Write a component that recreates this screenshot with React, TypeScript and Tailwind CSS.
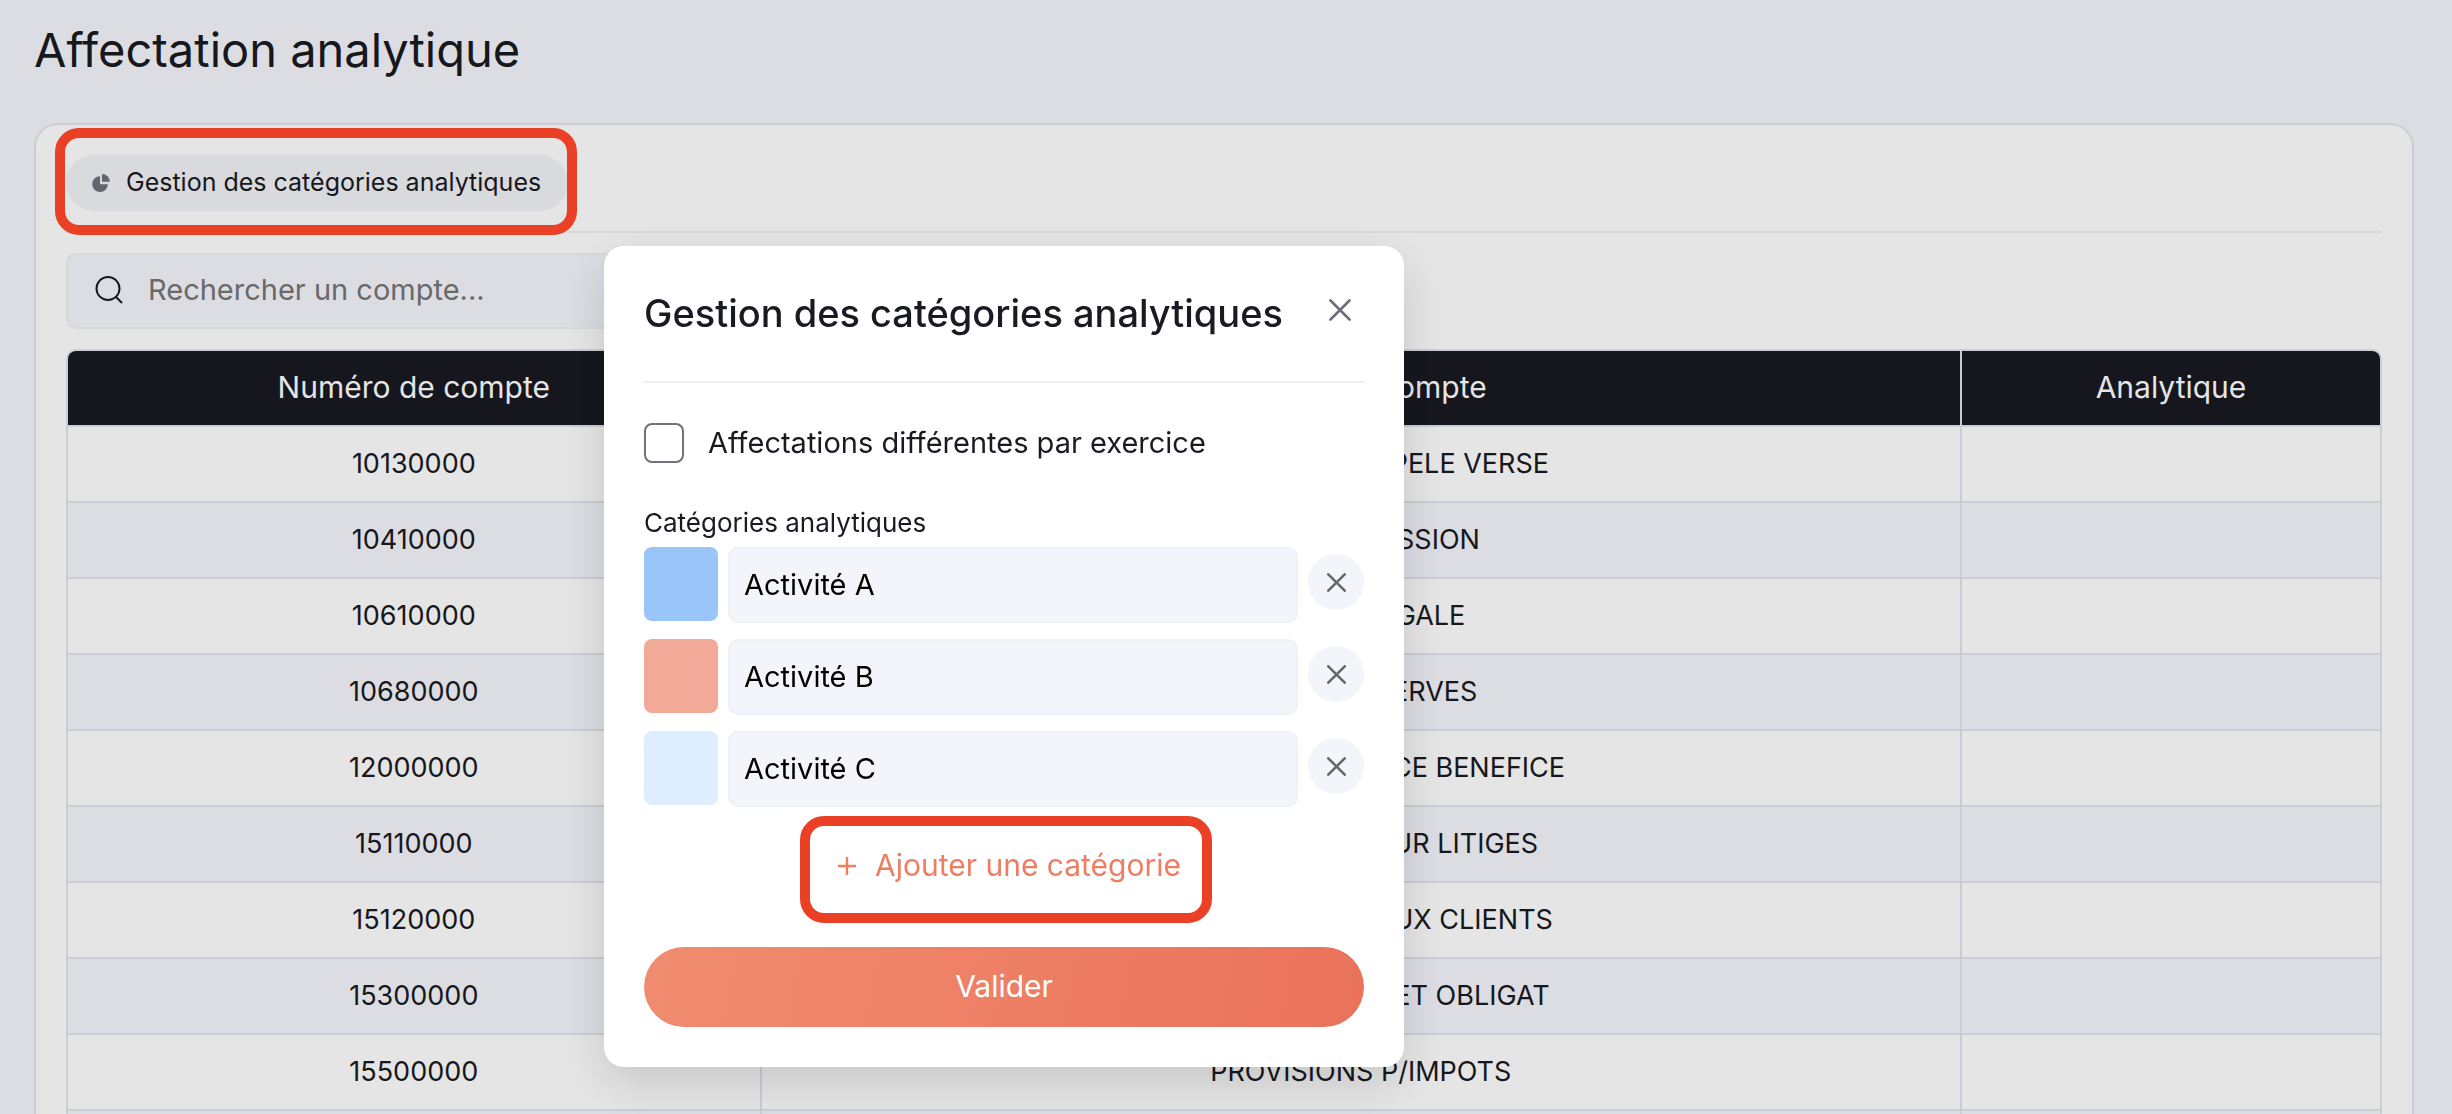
import { useState } from "react";

const accounts = [
  { number: "10130000", label: "CAP.SOUSCR.APPELE VERSE" },
  { number: "10410000", label: "PRIMES EMISSION" },
  { number: "10610000", label: "RESERV.LEGALE" },
  { number: "10680000", label: "AUTRE RESERVES" },
  { number: "12000000", label: "RESULTAT EXERCICE BENEFICE" },
  { number: "15110000", label: "PROVISIONS POUR LITIGES" },
  { number: "15120000", label: "GARANTIE DUE AUX CLIENTS" },
  { number: "15300000", label: "PROV.PENSIONS ET OBLIGAT" },
  { number: "15500000", label: "PROVISIONS P/IMPOTS" },
  { number: "", label: "" },
];

const initialCategories = [
  { id: 1, name: "Activité A", color: "#9ac5f8" },
  { id: 2, name: "Activité B", color: "#f3a998" },
  { id: 3, name: "Activité C", color: "#dfeefe" },
];

function PieIcon() {
  return (
    <svg viewBox="0 0 54 55" className="h-[18px] w-[18px] fill-[#6f717c]">
      <path d="M24 7a24 24 0 1 0 24 24H24Z" />
      <path d="M30 0a24 24 0 0 1 24 24H30Z" />
    </svg>
  );
}

function SearchIcon() {
  return (
    <svg viewBox="0 0 28 28" fill="none" className="h-7 w-7 shrink-0 stroke-[#1a1a22] stroke-2">
      <circle cx="13" cy="12.5" r="11.5" />
      <path d="M20.5 20.5 27 27" />
    </svg>
  );
}

function CrossIcon({ className }: { className: string }) {
  return (
    <svg viewBox="0 0 22 22" fill="none" strokeLinecap="round" className={className}>
      <path d="M1.5 1.5 20.5 20.5M20.5 1.5 1.5 20.5" />
    </svg>
  );
}

function AccountsTable() {
  return (
    <div className="mt-5 overflow-hidden rounded-[10px] border-2 border-[#e3e4ec]">
      <table className="w-full table-fixed border-separate border-spacing-0 text-center text-[#1a1a22]">
        <thead>
          <tr className="h-[76px] bg-[#191922] text-[30px] text-white">
            <th className="w-[30%] border-r-2 border-b-2 border-[#e3e4ec] pb-0.5 font-normal">Numéro de compte</th>
            <th className="border-r-2 border-b-2 border-[#e3e4ec] pb-0.5 font-normal">Libellé du compte</th>
            <th className="w-[418px] border-b-2 border-[#e3e4ec] pb-0.5 font-normal">Analytique</th>
          </tr>
        </thead>
        <tbody>
          {accounts.map((account) => (
            <tr key={account.number} className="h-[76px] text-[27px] even:bg-[#f5f6fd]">
              <td className="border-r-2 border-b-2 border-[#e3e4ec]">{account.number}</td>
              <td className="border-r-2 border-b-2 border-[#e3e4ec]">{account.label}</td>
              <td className="border-b-2 border-[#e3e4ec]"></td>
            </tr>
          ))}
        </tbody>
      </table>
    </div>
  );
}

function CategoriesModal() {
  const [categories, setCategories] = useState(initialCategories);

  const update = (id: number, patch: { name?: string; color?: string }) =>
    setCategories(categories.map((c) => (c.id === id ? { ...c, ...patch } : c)));

  const add = () =>
    setCategories([...categories, { id: Date.now(), name: "", color: "#dfeefe" }]);

  return (
    <div
      role="dialog"
      aria-labelledby="modal-title"
      className="flex w-[800px] flex-col rounded-[20px] bg-white p-10 shadow-[0_16px_48px_rgba(0,0,0,0.14)]"
    >
      <div className="flex items-start justify-between border-b-2 border-[#f1f1f3] pb-10">
        <h2 id="modal-title" className="text-[38px] leading-[55px] font-medium whitespace-nowrap">
          Gestion des catégories analytiques
        </h2>
        <button aria-label="Fermer" className="flex h-12 w-12 items-center justify-center">
          <CrossIcon className="h-[22px] w-[22px] stroke-[#6b6d78] stroke-[2.6]" />
        </button>
      </div>

      <label className="mt-10 flex h-10 items-center gap-6 text-[29px]">
        <input
          type="checkbox"
          className="h-10 w-10 appearance-none rounded-lg border-2 border-[#6f717c] bg-white checked:bg-[#ee7d62]"
        />
        Affectations différentes par exercice
      </label>

      <h3 className="mt-[42px] mb-1.5 text-[26px] leading-9">Catégories analytiques</h3>
      <div className="flex flex-col gap-4">
        {categories.map((category) => (
          <div key={category.id} className="flex items-start gap-[10px]">
            <input
              type="color"
              aria-label="Couleur"
              value={category.color}
              onChange={(e) => update(category.id, { color: e.target.value })}
              className="h-[74px] w-[74px] shrink-0 appearance-none overflow-hidden rounded-lg border-0 p-0 [&::-webkit-color-swatch]:border-0 [&::-webkit-color-swatch-wrapper]:p-0"
            />
            <input
              type="text"
              aria-label="Nom de la catégorie"
              value={category.name}
              onChange={(e) => update(category.id, { name: e.target.value })}
              className="h-[76px] min-w-0 flex-1 rounded-[10px] border-2 border-[#f0f1f6] bg-[#f4f5fb] px-[14px] pb-0.5 text-[29px] text-black"
            />
            <button
              aria-label={`Supprimer ${category.name}`}
              onClick={() => setCategories(categories.filter((c) => c.id !== category.id))}
              className="mt-[7px] flex h-14 w-14 shrink-0 items-center justify-center rounded-full bg-[#f4f5fb]"
            >
              <CrossIcon className="h-[19px] w-[19px] stroke-[#67686d] stroke-3" />
            </button>
          </div>
        ))}
      </div>

      <button
        onClick={add}
        className="relative mt-5 flex h-[76px] items-center gap-2 self-center text-[30px] text-[#ee7d62]"
      >
        <svg viewBox="0 0 40 40" className="h-10 w-10 stroke-[#ee7d62] stroke-[2.4]">
          <path d="M11 21h18M20 12v18" />
        </svg>
        Ajouter une catégorie
        <span className="pointer-events-none absolute -top-[11px] -right-[31px] -bottom-5 -left-[27px] rounded-3xl border-10 border-[#ea4025]" />
      </button>

      <button className="mt-11 h-20 rounded-full bg-linear-100 from-[#f08c6f] to-[#ea725a] pb-0.5 text-[30px] text-white">
        Valider
      </button>
    </div>
  );
}

export default function App() {
  return (
    <div className="h-screen overflow-hidden bg-[#f5f6fd] pt-5 pr-[38px] pl-[34px] font-['Inter','Noto_Sans',sans-serif] text-[#1a1a22]">
      <h1 className="text-[47px] leading-[60px]">Affectation analytique</h1>

      <main className="mt-[43px] rounded-3xl border-2 border-[#e3e4ee] bg-white p-[30px]">
        <div className="flex border-b-2 border-[#f1f1f3] pb-5">
          <button className="relative flex h-14 items-center gap-4 rounded-full bg-[#f2f3f8] pr-[27px] pl-[26px] text-[25px]">
            <PieIcon />
            Gestion des catégories analytiques
            <span className="pointer-events-none absolute -top-[27px] -right-[9px] -bottom-6 -left-[11px] z-20 rounded-3xl border-10 border-[#ea4025]" />
          </button>
        </div>

        <label className="mt-5 flex h-[76px] w-[600px] items-center gap-[25px] rounded-[10px] border-2 border-[#f0f1f6] bg-[#f5f6fd] px-[27px] pb-0.5">
          <SearchIcon />
          <input
            type="text"
            aria-label="Rechercher un compte"
            placeholder="Rechercher un compte..."
            className="min-w-0 flex-1 bg-transparent text-[29px] outline-none placeholder:text-[#757575]"
          />
        </label>

        <AccountsTable />
      </main>

      <div className="fixed inset-0 z-10 flex items-start bg-black/10 pt-[246px] pl-[604px]">
        <CategoriesModal />
      </div>
    </div>
  );
}
